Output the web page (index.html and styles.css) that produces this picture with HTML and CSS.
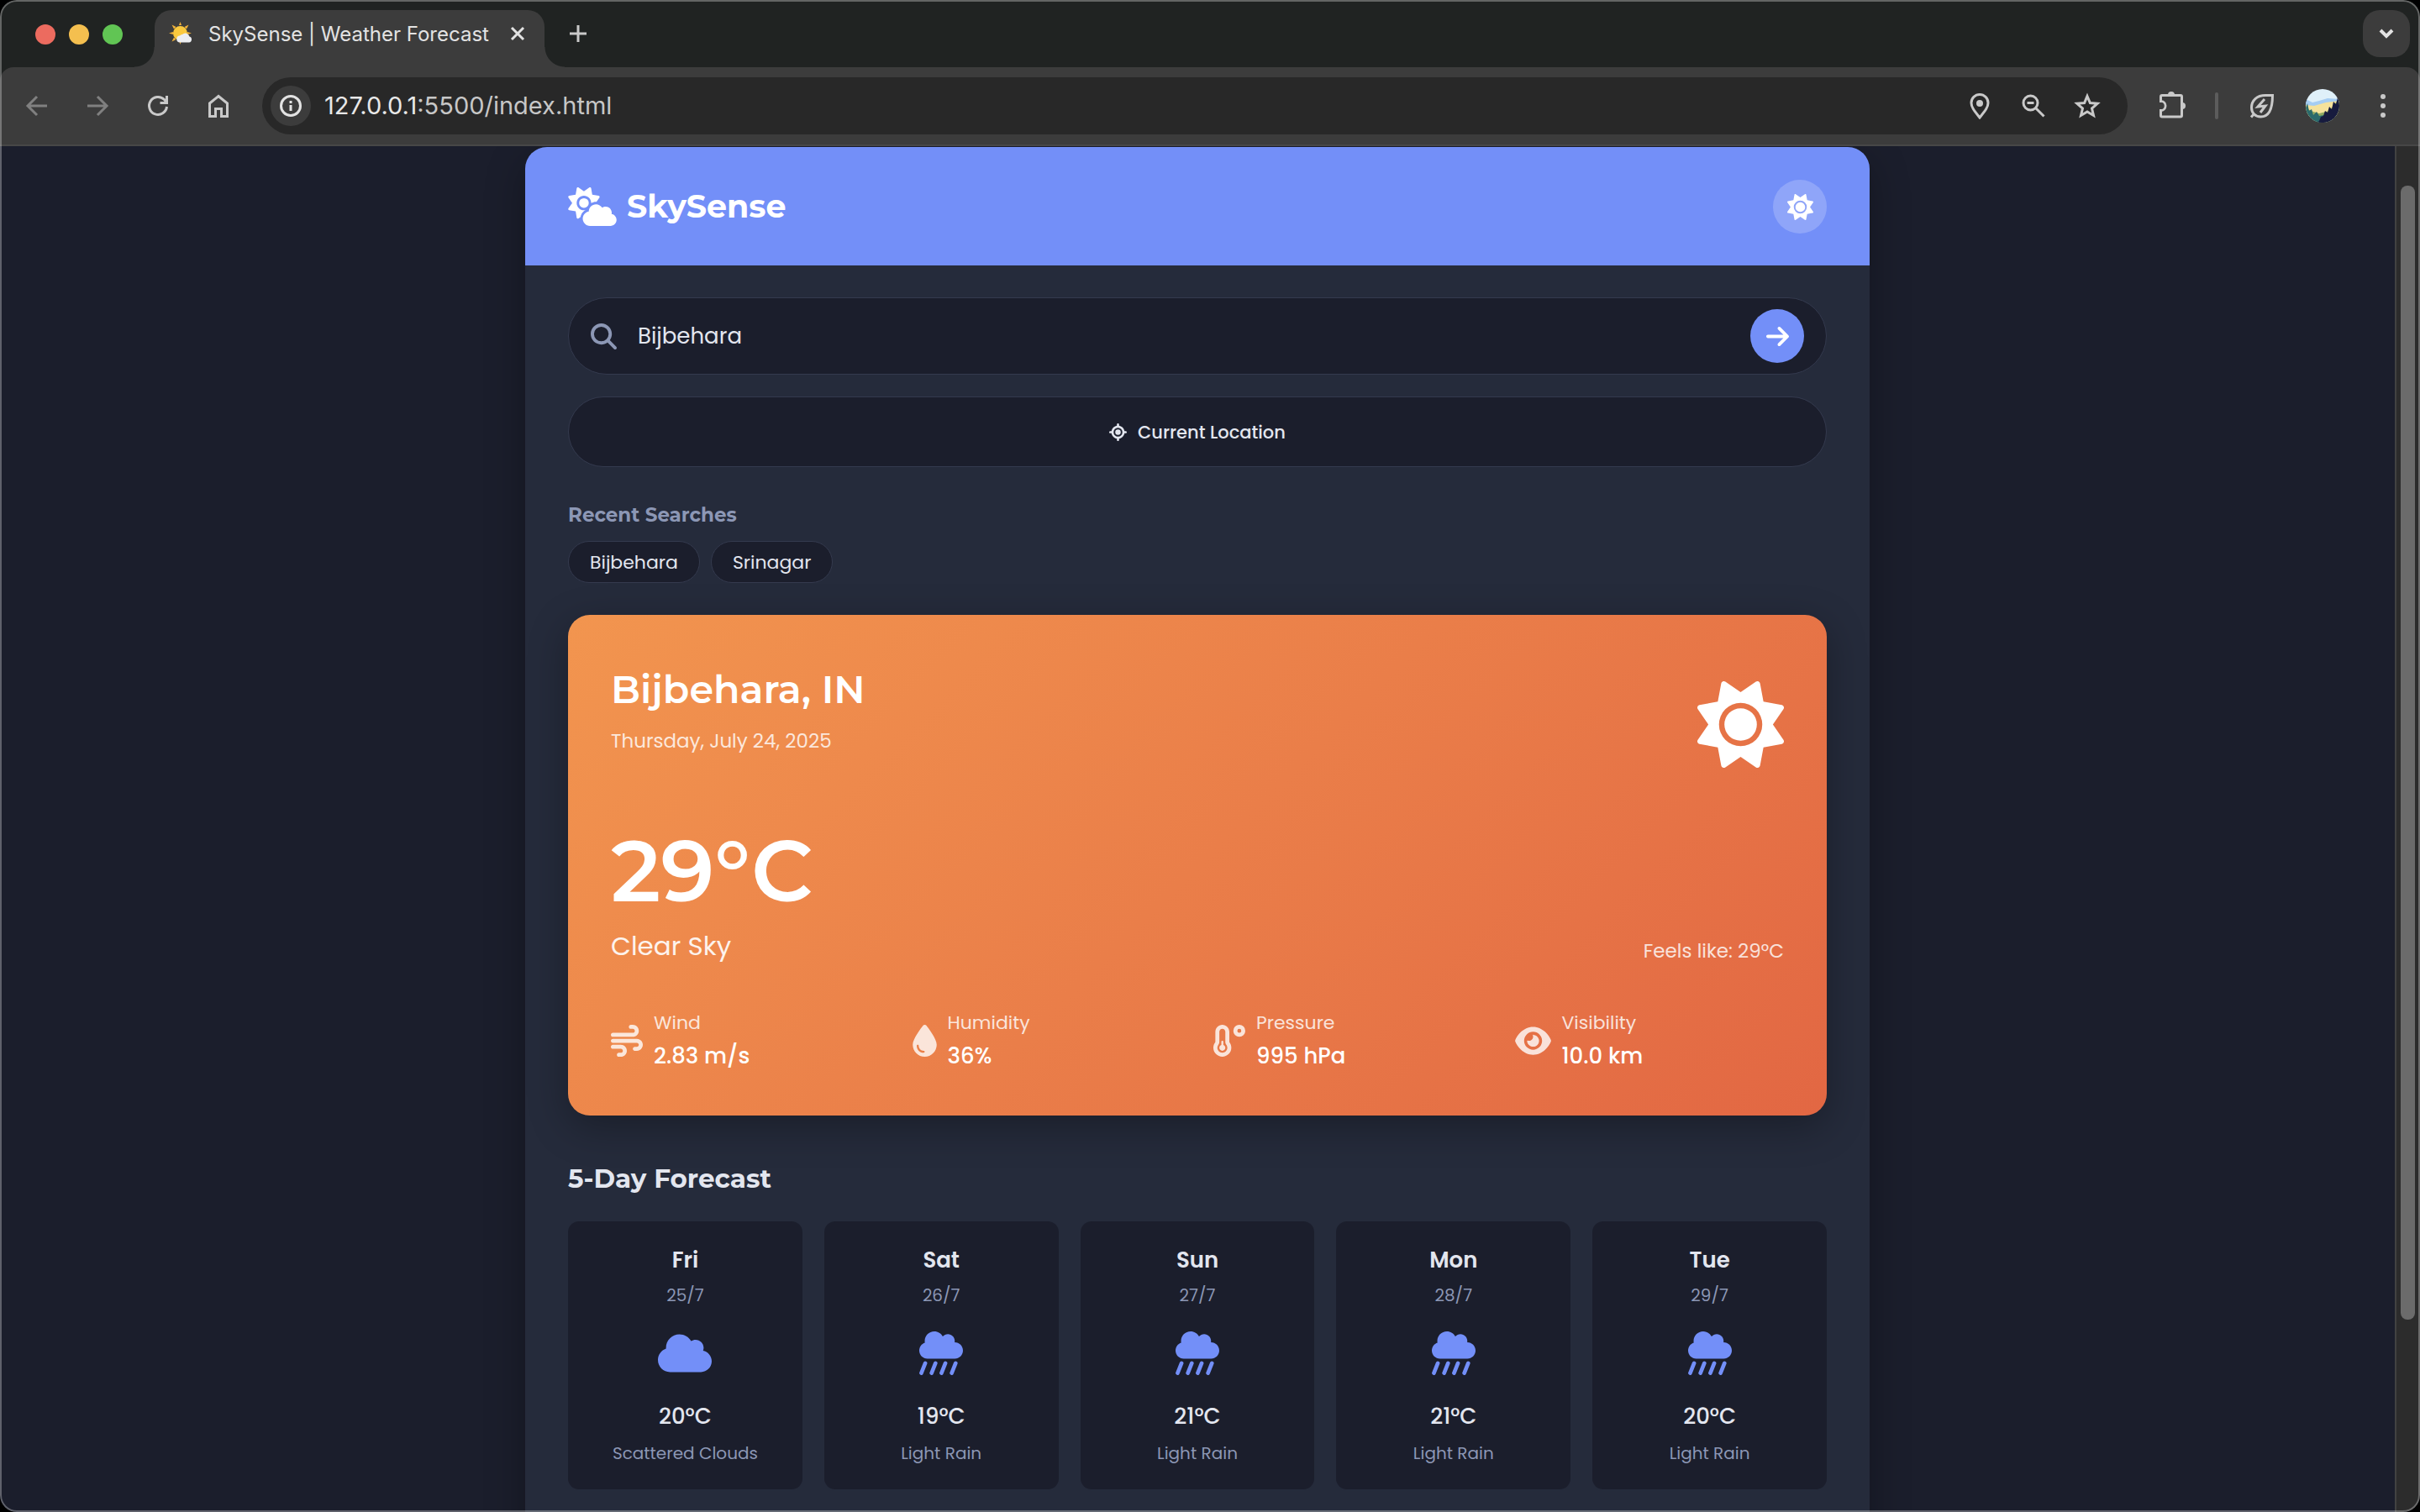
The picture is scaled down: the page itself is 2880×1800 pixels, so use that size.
FILE: index.html
```html
<!DOCTYPE html>
<html lang="en">
<head>
<meta charset="utf-8">
<title>SkySense | Weather Forecast</title>
<link rel="stylesheet" href="styles.css">
</head>
<body>
<svg class="defs" aria-hidden="true">
  <symbol id="sun" viewBox="0 0 512 512"><path d="M361.5 1.2c5 2.1 8.6 6.6 9.6 11.9L391 121l107.9 19.8c5.3 1 9.8 4.6 11.9 9.6s1.5 10.7-1.6 15.2L446.9 256l62.3 90.3c3.1 4.5 3.7 10.2 1.6 15.2s-6.6 8.6-11.9 9.6L391 391 371.1 498.9c-1 5.3-4.6 9.8-9.6 11.9s-10.7 1.5-15.2-1.6L256 446.9l-90.3 62.3c-4.5 3.1-10.2 3.7-15.2 1.6s-8.6-6.6-9.6-11.9L121 391 13.1 371.1c-5.3-1-9.8-4.6-11.9-9.6s-1.5-10.7 1.6-15.2L65.1 256 2.8 165.7c-3.1-4.5-3.7-10.2-1.6-15.2s6.6-8.6 11.9-9.6L121 121 140.9 13.1c1-5.3 4.6-9.8 9.6-11.9s10.7-1.5 15.2 1.6L256 65.1 346.3 2.8c4.5-3.1 10.2-3.7 15.2-1.6zM160 256a96 96 0 1 1 192 0 96 96 0 1 1 -192 0zm224 0a128 128 0 1 0 -256 0 128 128 0 1 0 256 0z"/></symbol>
  <symbol id="cloud-sun" viewBox="0 0 640 512"><path d="M294.2 1.2c5.1 2.1 8.7 6.7 9.6 12.1l14.1 84.7 84.7 14.1c5.4 .9 10 4.5 12.1 9.6s1.5 10.9-1.6 15.4l-38.5 55c-2.2-.1-4.4-.2-6.7-.2c-23.3 0-45.1 6.2-64 17.1l0-1.1c0-53-43-96-96-96s-96 43-96 96s43 96 96 96c8.1 0 15.9-1 23.4-2.9c-36.6 18.1-63.3 53.1-69.8 94.9l-24.4 17c-4.5 3.2-10.3 3.8-15.4 1.6s-8.7-6.7-9.6-12.1L98.1 317.9 13.4 303.8c-5.4-.9-10-4.5-12.1-9.6s-1.5-10.9 1.6-15.4L52.5 208 2.9 137.2c-3.2-4.5-3.8-10.3-1.6-15.4s6.7-8.7 12.1-9.6L98.1 98.1l14.1-84.7c.9-5.4 4.5-10 9.6-12.1s10.9-1.5 15.4 1.6L208 52.5 278.8 2.9c4.5-3.2 10.3-3.8 15.4-1.6zM144 208a64 64 0 1 1 128 0 64 64 0 1 1 -128 0zM639.9 431.9c0 44.2-35.8 80-80 80l-271.9 0c-53 0-96-43-96-96c0-47.6 34.6-87 80-94.6l0-1.3c0-53 43-96 96-96c34.9 0 65.4 18.6 82.2 46.4c13-9.1 28.8-14.4 45.8-14.4c44.2 0 80 35.8 80 80c0 5.9-.6 11.7-1.9 17.2c37.4 6.7 65.8 39.4 65.8 78.7z"/></symbol>
  <symbol id="cloud" viewBox="0 0 640 512"><path d="M0 336c0 79.5 64.5 144 144 144l368 0c70.7 0 128-57.3 128-128c0-61.9-44-113.6-102.4-125.4c4.1-10.7 6.4-22.4 6.4-34.6c0-53-43-96-96-96c-19.7 0-38.1 6-53.3 16.2C367 64.2 315.3 32 256 32C167.6 32 96 103.6 96 192c0 2.7 .1 5.4 .2 8.1C40.2 219.8 0 273.2 0 336z"/></symbol>
  <symbol id="rain" viewBox="0 0 512 512"><path d="M96 320c-53 0-96-43-96-96c0-42.5 27.6-78.6 65.9-91.2C64.7 126.1 64 119.1 64 112C64 50.1 114.1 0 176 0c43.1 0 80.5 24.3 99.2 60c14.7-17.1 36.5-28 60.8-28c44.2 0 80 35.8 80 80c0 5.5-.6 10.8-1.6 16c.5 0 1.1 0 1.6 0c53 0 96 43 96 96s-43 96-96 96L96 320z"/><path d="M70 374L24 488M190 374L144 488M306 374L260 488M426 374L380 488" fill="none" stroke="currentColor" stroke-width="46" stroke-linecap="round"/></symbol>
  <symbol id="wind" viewBox="0 0 512 512"><path d="M288 32c0 17.7 14.3 32 32 32l32 0c17.7 0 32 14.3 32 32s-14.3 32-32 32L32 128c-17.7 0-32 14.3-32 32s14.3 32 32 32l320 0c53 0 96-43 96-96s-43-96-96-96L320 0c-17.7 0-32 14.3-32 32zm64 352c0 17.7 14.3 32 32 32l32 0c53 0 96-43 96-96s-43-96-96-96L32 224c-17.7 0-32 14.3-32 32s14.3 32 32 32l384 0c17.7 0 32 14.3 32 32s-14.3 32-32 32l-32 0c-17.7 0-32 14.3-32 32zM128 512l32 0c53 0 96-43 96-96s-43-96-96-96L32 320c-17.7 0-32 14.3-32 32s14.3 32 32 32l128 0c17.7 0 32 14.3 32 32s-14.3 32-32 32l-32 0c-17.7 0-32 14.3-32 32s14.3 32 32 32z"/></symbol>
  <symbol id="droplet" viewBox="0 0 384 512"><path d="M192 512C86 512 0 426 0 320C0 228.8 130.2 57.7 166.6 11.7C172.6 4.2 181.5 0 191.1 0l1.8 0c9.6 0 18.5 4.2 24.5 11.7C253.8 57.7 384 228.8 384 320c0 106-86 192-192 192zM96 336c0-8.8-7.2-16-16-16s-16 7.2-16 16c0 61.9 50.1 112 112 112c8.8 0 16-7.2 16-16s-7.2-16-16-16c-44.2 0-80-35.8-80-80z"/></symbol>
  <symbol id="thermo" viewBox="0 0 512 512"><path d="M96 112c0-26.5 21.5-48 48-48s48 21.5 48 48V276.5c0 17.3 7.1 31.9 15.3 42.5C217.8 332.6 224 349.5 224 368c0 44.2-35.8 80-80 80s-80-35.8-80-80c0-18.5 6.2-35.4 16.7-48.9C88.9 308.4 96 293.8 96 276.5V112zM144 0C82.1 0 32 50.2 32 112V276.5c0 .1-.1 .3-.2 .6c-.2 .6-.8 1.6-1.7 2.8C11.2 304.2 0 334.8 0 368c0 79.5 64.5 144 144 144s144-64.5 144-144c0-33.2-11.2-63.8-30.1-88.1c-.9-1.2-1.5-2.2-1.7-2.8c-.1-.3-.2-.5-.2-.6V112C256 50.2 205.9 0 144 0zm0 416c26.5 0 48-21.5 48-48c0-20.9-13.4-38.7-32-45.3V272c0-8.8-7.2-16-16-16s-16 7.2-16 16v50.7c-18.6 6.6-32 24.4-32 45.3c0 26.5 21.5 48 48 48zM416 64a32 32 0 1 1 0 64 32 32 0 1 1 0-64zm0 128A96 96 0 1 0 416 0a96 96 0 1 0 0 192z"/></symbol>
  <symbol id="eye" viewBox="0 0 576 512"><path d="M288 32c-80.8 0-145.5 36.8-192.6 80.6C48.6 156 17.3 208 2.5 243.7c-3.3 7.9-3.3 16.7 0 24.6C17.3 304 48.6 356 95.4 399.4C142.5 443.2 207.2 480 288 480s145.5-36.8 192.6-80.6c46.8-43.5 78.1-95.4 93-131.1c3.3-7.9 3.3-16.7 0-24.6c-14.9-35.7-46.2-87.7-93-131.1C433.5 68.8 368.8 32 288 32zM144 256a144 144 0 1 1 288 0 144 144 0 1 1 -288 0zm144-64c0 35.3-28.7 64-64 64c-7.1 0-13.9-1.2-20.3-3.3c-5.5-1.8-11.9 1.6-11.7 7.4c.3 6.9 1.3 13.8 3.2 20.7c13.7 51.2 66.4 81.6 117.6 67.9s81.6-66.4 67.9-117.6c-11.1-41.5-47.8-69.4-88.6-71.1c-5.8-.2-9.2 6.1-7.4 11.7c2.1 6.4 3.3 13.2 3.3 20.3z"/></symbol>
  <symbol id="search" viewBox="0 0 512 512"><path d="M416 208c0 45.9-14.9 88.3-40 122.7L502.6 457.4c12.5 12.5 12.5 32.8 0 45.3s-32.8 12.5-45.3 0L330.7 376c-34.4 25.2-76.8 40-122.7 40C93.1 416 0 322.9 0 208S93.1 0 208 0S416 93.1 416 208zM208 352a144 144 0 1 0 0-288 144 144 0 1 0 0 288z"/></symbol>
  <symbol id="arrow" viewBox="0 0 448 512"><path d="M438.6 278.6c12.5-12.5 12.5-32.8 0-45.3l-160-160c-12.5-12.5-32.8-12.5-45.3 0s-12.5 32.8 0 45.3L338.8 224 32 224c-17.7 0-32 14.3-32 32s14.3 32 32 32l306.7 0L233.4 393.4c-12.5 12.5-12.5 32.8 0 45.3s32.8 12.5 45.3 0l160-160z"/></symbol>
  <symbol id="crosshairs" viewBox="0 0 512 512"><path d="M256 0c17.7 0 32 14.3 32 32l0 34.7C368.4 80.1 431.9 143.6 445.3 224l34.7 0c17.7 0 32 14.3 32 32s-14.3 32-32 32l-34.7 0C431.9 368.4 368.4 431.9 288 445.3l0 34.7c0 17.7-14.3 32-32 32s-32-14.3-32-32l0-34.7C143.6 431.9 80.1 368.4 66.7 288L32 288c-17.7 0-32-14.3-32-32s14.3-32 32-32l34.7 0C80.1 143.6 143.6 80.1 224 66.7L224 32c0-17.7 14.3-32 32-32zM128 256a128 128 0 1 0 256 0 128 128 0 1 0 -256 0zm128-80a80 80 0 1 1 0 160 80 80 0 1 1 0-160z"/></symbol>
</svg>

<div class="window">
  <header class="tabstrip">
    <div class="lights"><span class="light red"></span><span class="light yellow"></span><span class="light green"></span></div>
    <div class="tab">
      <svg class="favicon" viewBox="0 0 28 28"><g fill="#f0b03a"><path d="M12 4l1.500-4L15 4zM12 22l1.500 5L15 22zM0 13.500L5 12v3zM27 13.500L22 12v3zM3.500 3.500L8.500 6L6 8.500zM23.500 3.500L18.500 6L21 8.500zM3.500 23.500L6 18.500L8.500 21z"/></g><circle cx="13.500" cy="13.500" r="8.500" fill="#fac93e"/><path d="M13.500 24.500a4 4 0 0 1-.5-8a3.500 3.500 0 0 1 3-1.500a5 5 0 0 1 8.500 2.500a3.600 3.600 0 0 1-.5 7z" fill="#eceef2"/></svg>
      <span class="tab-title">SkySense | Weather Forecast</span>
      <button class="chrome-btn tab-close" aria-label="Close tab"><svg class="i20" viewBox="0 0 20 20"><path d="M3 3l14 14M17 3L3 17"/></svg></button>
    </div>
    <button class="chrome-btn new-tab" aria-label="New tab"><svg class="i20" viewBox="0 0 20 20"><path d="M10 0v20M0 10h20"/></svg></button>
    <button class="chrome-btn tab-search" aria-label="Search tabs"><svg class="i20" viewBox="0 0 20 20"><path d="M3 6l7 7l7-7"/></svg></button>
  </header>

  <nav class="toolbar">
    <div class="nav-btns">
      <button class="chrome-btn dim" aria-label="Back"><svg class="i28" viewBox="0 0 28 28"><path d="M26 14H3M14 3L3 14l11 11"/></svg></button>
      <button class="chrome-btn dim" aria-label="Forward"><svg class="i28" viewBox="0 0 28 28"><path d="M2 14h23M14 3l11 11l-11 11"/></svg></button>
      <button class="chrome-btn" aria-label="Reload"><svg class="i28" viewBox="0 0 28 28"><path d="M24.500 15A10.500 10.500 0 1 1 21.500 6.500L24 9.500M24.500 2v9M26 10.500h-9.500"/></svg></button>
      <button class="chrome-btn" aria-label="Home"><svg class="i28" viewBox="0 0 28 28"><path d="M3.500 11L14 2.500L24.500 11V26.500h-7v-9h-7v9h-7z"/></svg></button>
    </div>
    <div class="omnibox">
      <button class="chrome-btn site-info" aria-label="Site information"><svg class="i28" viewBox="0 0 28 28"><circle cx="14" cy="14" r="11.500"/><path d="M14 13v7M14 8v3"/></svg></button>
      <div class="url" role="textbox" aria-label="Address" contenteditable="true" spellcheck="false"><span class="host">127.0.0.1</span>:5500/index.html</div>
      <button class="chrome-btn" aria-label="Location"><svg class="i32" viewBox="0 0 32 32"><path d="M16 30C10 22.500 6 18 6 12.500a10 10 0 0 1 20 0C26 18 22 22.500 16 30z"/><circle cx="16" cy="13" r="4" fill="currentColor" stroke="none"/></svg></button>
      <button class="chrome-btn" aria-label="Zoom"><svg class="i28" viewBox="0 0 28 28"><circle cx="10.500" cy="10.500" r="8.500"/><path d="M17 17l9.500 9.500M6.500 10.500h8"/></svg></button>
      <button class="chrome-btn" aria-label="Bookmark"><svg class="i32" viewBox="0 0 32 32"><path d="M16 4.500l3.400 8.100l8.700.7l-6.600 5.700l2 8.500L16 23l-7.500 4.500l2-8.500l-6.600-5.700l8.700-.7z"/></svg></button>
    </div>
    <button class="chrome-btn" aria-label="Extensions"><svg class="i34" viewBox="0 0 34 34"><path d="M3.500 22.500v6a1.500 1.500 0 0 0 1.500 1.500h22a1.500 1.500 0 0 0 1.500-1.500V6a1.500 1.500 0 0 0-1.500-1.500H5A1.500 1.500 0 0 0 3.500 6v5.500a5.500 5.500 0 0 1 0 11z"/><path d="M2 13h1.500a4 4 0 0 1 0 8H2z" class="notch"/><path d="M12 4a4 4 0 0 1 8 0zM29 13a4 4 0 0 1 0 8z" fill="currentColor" stroke="none"/></svg></button>
    <span class="divider"></span>
    <button class="chrome-btn" aria-label="Energy saver"><svg class="i32" viewBox="0 0 32 32"><path d="M28.500 3.500H20C10 3.500 3.500 9.500 3.500 18c0 6 4 11 11 11C24.500 29 28.500 20 28.500 3.500zM3 29.500l4-4.500M19 8l-8 9l9-1l-6 8"/></svg></button>
    <button class="chrome-btn avatar" aria-label="Profile"><svg viewBox="0 0 40 40"><rect width="40" height="40" fill="#dff0f9"/><path d="M0 12l8 4 8-2 10-3 14 1v12H0z" fill="#a5cdf3"/><path d="M0 19l10 1 14-4 16-2v20H0z" fill="#f5e29b"/><path d="M0 22l6 4 10 3 12-3 8-10 4-2v26H0z" fill="#8fa860"/><path d="M0 22l2-5 2 9 3-2 2 7 4-4 3 5 6-1v9H0z" fill="#2b6a6c"/><path d="M40 12l-2-2-2 8-3-3-2 9-3-3-2 7-3-2-2 6-3 1-2 5-6 4h30z" fill="#171b3e"/></svg></button>
    <button class="chrome-btn" aria-label="Menu"><svg class="i32" viewBox="0 0 32 32"><g fill="currentColor" stroke="none"><circle cx="16" cy="5" r="3"/><circle cx="16" cy="16" r="3"/><circle cx="16" cy="27" r="3"/></g></svg></button>
  </nav>

  <div class="viewport">
    <div class="page">
      <main class="app">
        <div class="app-header">
          <h1 class="logo"><svg class="logo-icon"><use href="#cloud-sun"/></svg>SkySense</h1>
          <button class="theme-toggle" aria-label="Toggle theme"><svg class="icon"><use href="#sun"/></svg></button>
        </div>
        <div class="app-body">
          <form class="search" onsubmit="return false">
            <label for="city" aria-label="City"><svg class="icon"><use href="#search"/></svg></label>
            <input id="city" type="text" value="Bijbehara">
            <button class="search-go" type="submit" aria-label="Search"><svg class="arrow"><use href="#arrow"/></svg></button>
          </form>
          <button class="locate"><svg class="locate-icon"><use href="#crosshairs"/></svg>Current Location</button>

          <section class="recent">
            <h2>Recent Searches</h2>
            <div class="chips"><button class="chip">Bijbehara</button><button class="chip">Srinagar</button></div>
          </section>

          <section class="current">
            <div class="current-top">
              <div>
                <h2 class="city">Bijbehara, IN</h2>
                <p class="date">Thursday, July 24, 2025</p>
              </div>
              <svg class="current-icon"><use href="#sun"/></svg>
            </div>
            <div class="current-main">
              <div>
                <p class="temp">29°C</p>
                <p class="condition">Clear Sky</p>
              </div>
              <p class="feels">Feels like: 29°C</p>
            </div>
            <div class="details">
              <div class="detail"><svg class="d-icon"><use href="#wind"/></svg><div><p class="d-label">Wind</p><p class="d-value">2.83 m/s</p></div></div>
              <div class="detail"><svg class="d-icon narrow"><use href="#droplet"/></svg><div><p class="d-label">Humidity</p><p class="d-value">36%</p></div></div>
              <div class="detail"><svg class="d-icon"><use href="#thermo"/></svg><div><p class="d-label">Pressure</p><p class="d-value">995 hPa</p></div></div>
              <div class="detail"><svg class="d-icon wide"><use href="#eye"/></svg><div><p class="d-label">Visibility</p><p class="d-value">10.0 km</p></div></div>
            </div>
          </section>

          <section class="forecast">
            <h2>5-Day Forecast</h2>
            <div class="days">
              <article class="day"><h3>Fri</h3><p class="d-date">25/7</p><svg class="f-icon cloud"><use href="#cloud"/></svg><p class="f-temp">20°C</p><p class="f-desc">Scattered Clouds</p></article>
              <article class="day"><h3>Sat</h3><p class="d-date">26/7</p><svg class="f-icon"><use href="#rain"/></svg><p class="f-temp">19°C</p><p class="f-desc">Light Rain</p></article>
              <article class="day"><h3>Sun</h3><p class="d-date">27/7</p><svg class="f-icon"><use href="#rain"/></svg><p class="f-temp">21°C</p><p class="f-desc">Light Rain</p></article>
              <article class="day"><h3>Mon</h3><p class="d-date">28/7</p><svg class="f-icon"><use href="#rain"/></svg><p class="f-temp">21°C</p><p class="f-desc">Light Rain</p></article>
              <article class="day"><h3>Tue</h3><p class="d-date">29/7</p><svg class="f-icon"><use href="#rain"/></svg><p class="f-temp">20°C</p><p class="f-desc">Light Rain</p></article>
            </div>
          </section>
        </div>
      </main>
    </div>
    <div class="scrollbar"><div class="thumb"></div></div>
  </div>
</div>
</body>
</html>
```

FILE: styles.css
```css
:root {
  --bg: #1b1e2c;
  --panel: #252b3b;
  --primary: #738ff8;
  --text: #e3e6ef;
  --muted: #8c97b5;
  --line: #343a4e;
  --strip: #202322;
  --bar: #3c3c3c;
  --sans: Poppins, Inter, sans-serif;
  --display: Montserrat, Inter, sans-serif;
}

* { box-sizing: border-box; margin: 0; padding: 0; }
body { background: #000; color: var(--text); font-family: var(--sans); }
button, input { font: inherit; color: inherit; background: none; border: 0; outline: 0; }
svg { display: block; flex: none; fill: currentColor; fill-rule: evenodd; }
.defs { position: absolute; width: 0; height: 0; }

/* Browser window */
.window {
  position: relative;
  display: flex;
  flex-direction: column;
  height: 100vh;
  overflow: hidden;
  border-radius: 20px;
  background: var(--strip);
}
.window::after {
  content: "";
  position: absolute;
  inset: 0;
  border: 2px solid rgba(255, 255, 255, .3);
  border-radius: 20px;
  pointer-events: none;
}
.chrome-btn { display: flex; align-items: center; justify-content: center; flex: none; color: #c9c9c9; }
.chrome-btn svg { fill: none; stroke: currentColor; stroke-width: 3; }
.chrome-btn.dim { color: #808080; }
.chrome-btn .notch { stroke: none; fill: var(--bar); }
.i20 { width: 20px; height: 20px; }
.i28 { width: 28px; height: 28px; }
.i32 { width: 32px; height: 32px; }
.i34 { width: 34px; height: 34px; }

.tabstrip { display: flex; height: 80px; padding: 12px 12px 0 42px; font-family: Inter, sans-serif; }
.lights { display: flex; gap: 16px; margin: 17px 38px 0 0; }
.light { width: 24px; height: 24px; border-radius: 50%; }
.red { background: #ec6b5f; }
.yellow { background: #f4bf4f; }
.green { background: #61c554; }
.tab {
  position: relative;
  display: flex;
  align-items: center;
  width: 464px;
  padding: 0 20px 12px 17px;
  border-radius: 20px 20px 0 0;
  background: var(--bar);
}
.tab::before, .tab::after { content: ""; position: absolute; bottom: 0; width: 24px; height: 24px; }
.tab::before { right: 100%; background: radial-gradient(circle at 0 0, transparent 23px, var(--bar) 24px); }
.tab::after { left: 100%; background: radial-gradient(circle at 100% 0, transparent 23px, var(--bar) 24px); }
.favicon { width: 28px; height: 28px; }
.tab-title { flex: 1; margin-left: 19px; font-size: 24px; color: #e3e3e3; white-space: nowrap; }
.tab-close { width: 24px; height: 24px; color: #e3e3e3; }
.new-tab { width: 24px; height: 56px; margin-left: 28px; }
.tab-search { width: 56px; height: 56px; margin-left: auto; border-radius: 20px; background: var(--bar); }
.tab-search svg { stroke-width: 4; stroke: #e3e3e3; }

.toolbar {
  display: flex;
  align-items: center;
  height: 94px;
  padding: 0 28px 0 30px;
  border-bottom: 2px solid #474747;
  border-radius: 16px 16px 0 0;
  background: var(--bar);
}
.nav-btns { display: flex; gap: 44px; margin-right: 38px; }
.omnibox {
  display: flex;
  align-items: center;
  flex: 1;
  gap: 34px;
  height: 68px;
  margin-right: 36px;
  padding: 0 32px 0 10px;
  border-radius: 34px;
  background: #282828;
}
.site-info { width: 48px; height: 48px; border-radius: 50%; background: var(--bar); color: #e3e3e3; }
.url { flex: 1; margin-left: -18px; font: 29px/40px Inter, sans-serif; color: #c7c7c7; outline: 0; white-space: nowrap; }
.host { color: #e8e8e8; }
.divider { width: 4px; height: 32px; margin: 0 36px 0 34px; border-radius: 2px; background: #5c5c5c; }
.avatar { width: 40px; height: 40px; margin: 0 36px; border-radius: 50%; overflow: hidden; }
.avatar svg { width: 40px; height: 40px; stroke: none; }

.viewport { display: flex; flex: 1; min-height: 0; background: var(--bg); }
.page { flex: 1; overflow: hidden; padding-top: 1px; }
.scrollbar { width: 30px; padding: 47px 6px 0 5px; border-left: 2px solid #424242; background: #2c2c2c; }
.thumb { height: 86%; max-height: 1350px; border-radius: 8px; background: #6b6b6b; }

/* Weather app */
.app {
  max-width: 1600px;
  min-height: 120%;
  margin: 0 auto;
  border-radius: 26px;
  background: var(--panel);
  box-shadow: 0 16px 48px rgba(0, 0, 0, .3);
}
.app-header {
  display: flex;
  align-items: center;
  justify-content: space-between;
  padding: 39px 51px 38px;
  border-radius: 26px 26px 0 0;
  background: var(--primary);
  color: #fff;
}
.logo { display: flex; align-items: center; gap: 12px; font: 700 38px/64px var(--display); }
.logo-icon { width: 58px; height: 46px; }
.icon { width: 31px; height: 31px; }
.theme-toggle, .search-go { display: grid; place-items: center; width: 64px; height: 64px; border-radius: 50%; }
.theme-toggle { background: rgba(255, 255, 255, .2); }

.app-body { padding: 38px 51px; }
.search {
  display: flex;
  align-items: center;
  height: 92px;
  padding: 0 26px;
  border: 1px solid var(--line);
  border-radius: 46px;
  background: var(--bg);
}
.search label { color: var(--muted); }
.search input { flex: 1; min-width: 0; padding: 0 25px; font-size: 26px; }
.search-go { background: var(--primary); color: #fff; }
.arrow { width: 27px; height: 31px; }
.locate {
  display: flex;
  align-items: center;
  justify-content: center;
  gap: 13px;
  width: 100%;
  height: 84px;
  margin-top: 26px;
  border: 1px solid var(--line);
  border-radius: 42px;
  background: var(--bg);
  font-size: 21px;
  font-weight: 500;
}
.locate-icon { width: 21px; height: 21px; }

.recent { margin: 37px 0 38px; }
.recent h2 { margin-bottom: 11px; font: 700 23px/40px var(--display); color: var(--muted); }
.chips { display: flex; gap: 13px; }
.chip { height: 50px; padding: 0 25px; border: 1px solid var(--line); border-radius: 25px; background: var(--bg); font-size: 22px; }

.current {
  padding: 51px;
  border-radius: 26px;
  background: linear-gradient(135deg, #f2954f, #e26743);
  box-shadow: 0 13px 48px rgba(0, 0, 0, .3);
  color: #fff;
}
.current-top { display: flex; justify-content: space-between; }
.city { margin-bottom: 4px; font: 600 46px/76px var(--display); }
.date { font-size: 23px; line-height: 38px; opacity: .8; }
.current-icon { width: 103px; height: 103px; margin: 28px 0 29px; }
.current-main { display: flex; align-items: flex-end; justify-content: space-between; margin: 43px 0 50px; }
.temp { margin-bottom: 14px; font: 600 102px/102px var(--display); }
.condition { font-size: 31px; line-height: 48px; opacity: .9; }
.feels { font-size: 23px; line-height: 36px; opacity: .8; }
.details { display: grid; grid-template-columns: repeat(4, 1fr); gap: 38px; }
.detail { display: flex; align-items: center; gap: 13px; }
.d-icon { width: 38px; height: 38px; opacity: .8; }
.narrow { width: 29px; }
.wide { width: 43px; }
.d-label { margin-bottom: 1px; font-size: 22px; line-height: 36px; opacity: .8; }
.d-value { font-size: 26px; font-weight: 500; line-height: 40px; }

.forecast { margin-top: 49px; }
.forecast h2 { margin-bottom: 25px; font: 700 31px/52px var(--display); }
.days { display: grid; grid-template-columns: repeat(5, 1fr); gap: 26px; }
.day { display: flex; flex-direction: column; align-items: center; padding: 26px 13px; border-radius: 13px; background: var(--bg); }
.day h3 { margin-bottom: 5px; font-size: 26px; font-weight: 600; line-height: 40px; }
.d-date, .f-desc { font-size: 20px; line-height: 34px; color: var(--muted); }
.f-icon { width: 52px; height: 52px; margin: 26px 0 29px; color: var(--primary); }
.cloud { width: 64px; }
.f-temp { margin-bottom: 7px; font-size: 26px; font-weight: 500; line-height: 40px; }
```
